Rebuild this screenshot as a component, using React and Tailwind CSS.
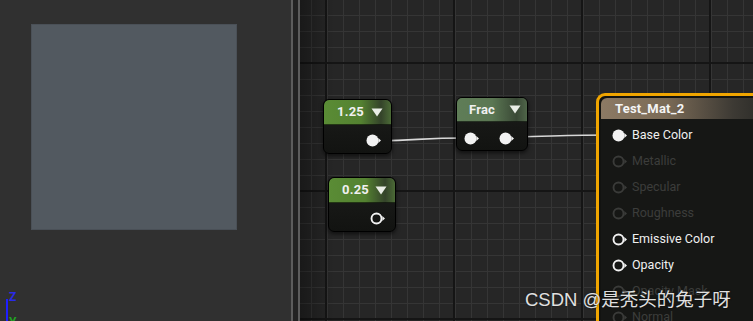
import React from 'react';

// output / input pin: filled, ring, or dim ring
function Pin({ kind = 'filled' }) {
  const fill = kind === 'filled' ? '#f2f2f2' : 'none';
  const stroke = kind === 'dim' ? '#3a3b39' : '#f2f2f2';
  const arrow = kind === 'dim' ? '#3a3b39' : '#f2f2f2';
  return (
    <svg width="17" height="13" viewBox="0 0 17 13" className="shrink-0">
      <circle cx="6.5" cy="6.5" r={kind === 'filled' ? 6 : 5} fill={fill} stroke={stroke} strokeWidth={kind === 'filled' ? 0 : 1.9} />
      <path d="M12.3 4 L15 6.5 L12.3 9 Z" fill={arrow} />
    </svg>
  );
}

function Triangle() {
  return (
    <svg width="12" height="9" viewBox="0 0 12 9">
      <path d="M0.5 0.5 H11.5 L6 8.5 Z" fill="#e9ede6" />
    </svg>
  );
}

function ConstNode({ label, className, header, pin, pinClass }) {
  return (
    <div className={`absolute rounded-[6px] border border-black bg-[linear-gradient(180deg,#1c1d1b,#121311)] shadow-[0_2px_4px_rgba(0,0,0,0.6)] overflow-hidden ${className}`}>
      <div className={`h-[25px] flex items-center justify-between pl-[13px] pr-[8px] rounded-t-[5px] border-b border-black/60 ${header}`}>
        <span className="text-[13px] font-bold text-[#f0f0f0] tracking-[0.2px]">{label}</span>
        <Triangle />
      </div>
      <div className={`flex ${pinClass}`}>{pin}</div>
    </div>
  );
}

const rows = [
  ['Base Color', 'filled', true],
  ['Metallic', 'dim', false],
  ['Specular', 'dim', false],
  ['Roughness', 'dim', false],
  ['Emissive Color', 'ring', true],
  ['Opacity', 'ring', true],
  ['Opacity Mask', 'dim', false],
  ['Normal', 'dim', false],
];

export default function App() {
  return (
    <div className="w-[753px] h-[321px] flex overflow-hidden bg-[#303030] font-['Roboto',sans-serif]">
      {/* preview viewport */}
      <div className="relative w-[291px] h-full bg-[#303030] shrink-0">
        <div className="ml-[31px] mt-[24px] w-[206px] h-[206px] bg-[#525960] border border-[#4a5057]" />
        <div className="absolute left-[6px] top-[299px] w-[2px] h-[22px] bg-[#1f1fff]" />
        <span className="absolute left-[9px] top-[291px] text-[12px] font-bold text-[#2a2ae8] leading-none">Z</span>
        <span className="absolute left-[9px] top-[316px] text-[12px] font-bold text-[#22a022] leading-none">Y</span>
      </div>

      {/* splitter */}
      <div className="w-[2px] h-full bg-[#5c5c5c]" />
      <div className="w-[5px] h-full bg-[#222222]" />
      <div className="w-[2px] h-full bg-[#5c5c5c]" />

      {/* graph canvas */}
      <div className="relative flex-1 h-full bg-[#262626] bg-[linear-gradient(to_right,#151515_2px,transparent_2px),linear-gradient(to_bottom,#151515_2px,transparent_2px),linear-gradient(to_right,#353535_1px,transparent_1px),linear-gradient(to_bottom,#353535_1px,transparent_1px)] bg-[size:128px_128px,128px_128px,16px_16px,16px_16px] bg-[position:25px_62px,25px_62px,11px_15px,11px_15px]">
        <div className="absolute left-0 top-0 w-[34px] h-full bg-[linear-gradient(90deg,rgba(0,0,0,0.35),transparent)]" />

        {/* wires */}
        <svg className="absolute left-0 top-0" width="453" height="321">
          <path d="M80 141 C 120 140, 125 138, 166 138" stroke="#d8d8d8" strokeWidth="1.6" fill="none" />
          <path d="M216 137 C 260 136, 270 135, 314 135" stroke="#d8d8d8" strokeWidth="1.6" fill="none" />
        </svg>

        <ConstNode
          label="1.25"
          className="left-[23px] top-[99px] w-[69px] h-[55px]"
          header="bg-[linear-gradient(90deg,#5a8c35,#548231_55%,#34432a_85%,#4b6a36)]"
          pin={<Pin kind="filled" />}
          pinClass="justify-end pr-[8px] pt-[9px]"
        />
        <ConstNode
          label="0.25"
          className="left-[28px] top-[177px] w-[68px] h-[55px]"
          header="bg-[linear-gradient(90deg,#5a8c35,#548231_55%,#34432a_85%,#4b6a36)]"
          pin={<Pin kind="ring" />}
          pinClass="justify-end pr-[8px] pt-[9px]"
        />
        <div className="absolute left-[156px] top-[97px] w-[72px] h-[54px] rounded-[6px] border border-black bg-[linear-gradient(180deg,#1c1d1b,#121311)] shadow-[0_2px_4px_rgba(0,0,0,0.6)] overflow-hidden">
          <div className="h-[24px] flex items-center justify-between pl-[12px] pr-[6px] border-b border-black/60 bg-[linear-gradient(90deg,#5f7d57,#5b7753_50%,#3a4936_85%,#4f6549)]">
            <span className="text-[13px] font-bold text-[#f0f0f0] tracking-[0.2px]">Frac</span>
            <Triangle />
          </div>
          <div className="flex justify-between pl-[7px] pr-[11px] pt-[10px]">
            <Pin kind="filled" />
            <Pin kind="filled" />
          </div>
        </div>

        {/* material result node */}
        <div className="absolute left-[296px] top-[93px] w-[170px] h-[240px] rounded-tl-[9px] border-l-[3px] border-t-[3px] border-[#f0a500] bg-[#121311] p-[2px] pr-0">
          <div className="h-[21px] rounded-tl-[6px] flex items-center pl-[14px] bg-[linear-gradient(90deg,#8c7a64,#7a6a56_40%,#3d3a34_80%,#2a2a27)]">
            <span className="text-[13px] font-bold text-[#f4f4f4] tracking-[0.2px]">Test_Mat_2</span>
          </div>
          <div className="flex flex-col pt-[3px] bg-[#161715]">
            {rows.map(([name, kind, on]) => (
              <div key={name} className="h-[26px] flex items-center gap-[3px] pl-[11px]">
                <Pin kind={kind} />
                <span className={`text-[12.5px] ${on ? 'text-[#f0f0f0]' : 'text-[#3c3d3b]'}`}>{name}</span>
              </div>
            ))}
          </div>
        </div>

        {/* watermark */}
        <span className="absolute left-[225px] top-[286px] text-[18.5px] text-[#e0e0e0] font-['Liberation_Sans','Noto_Sans_CJK_SC',sans-serif] [text-shadow:0_0_2px_rgba(0,0,0,0.6)] whitespace-nowrap">
          CSDN @是秃头的兔子呀
        </span>
      </div>
    </div>
  );
}
